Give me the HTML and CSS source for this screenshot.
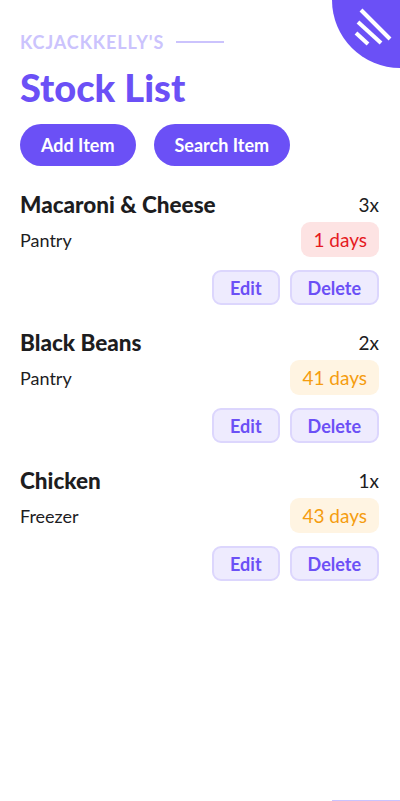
FILE: index.html
```html
<!DOCTYPE html>
<html>
<head>
<meta charset="utf-8">
<link rel="stylesheet" href="styles.css">
</head>
<body>
<div class="corner">
  <svg width="68" height="68" viewBox="0 0 68 68">
    <path d="M0 0 H68 V68 A68 68 0 0 1 0 0 Z" fill="#6b50f6"/>
    <line x1="29" y1="10" x2="58" y2="39" stroke="#fff" stroke-width="4"/>
    <line x1="26" y1="22" x2="49" y2="43" stroke="#fff" stroke-width="4"/>
    <line x1="24" y1="33" x2="36" y2="44" stroke="#fff" stroke-width="4"/>
  </svg>
</div>
<main class="page">
  <div class="brand">
    <span class="brand-name">KCJACKKELLY'S</span>
    <span class="brand-line"></span>
  </div>
  <h1 class="title">Stock List</h1>
  <div class="actions">
    <button class="btn-primary">Add Item</button>
    <button class="btn-primary">Search Item</button>
  </div>
  <ul class="list">
    <li class="item">
      <div class="row">
        <span class="name">Macaroni &amp; Cheese</span>
        <span class="qty">3x</span>
      </div>
      <div class="row">
        <span class="loc">Pantry</span>
        <span class="badge badge-red">1 days</span>
      </div>
      <div class="controls">
        <button class="btn-soft">Edit</button>
        <button class="btn-soft">Delete</button>
      </div>
    </li>
    <li class="item">
      <div class="row">
        <span class="name">Black Beans</span>
        <span class="qty">2x</span>
      </div>
      <div class="row">
        <span class="loc">Pantry</span>
        <span class="badge badge-orange">41 days</span>
      </div>
      <div class="controls">
        <button class="btn-soft">Edit</button>
        <button class="btn-soft">Delete</button>
      </div>
    </li>
    <li class="item">
      <div class="row">
        <span class="name">Chicken</span>
        <span class="qty">1x</span>
      </div>
      <div class="row">
        <span class="loc">Freezer</span>
        <span class="badge badge-orange">43 days</span>
      </div>
      <div class="controls">
        <button class="btn-soft">Edit</button>
        <button class="btn-soft">Delete</button>
      </div>
    </li>
  </ul>
</main>
<div class="bottom-line"></div>
</body>
</html>
```
FILE: styles.css
```css
* { box-sizing: border-box; }
html, body { margin: 0; padding: 0; }
body {
  width: 400px;
  height: 801px;
  overflow: hidden;
  background: #fff;
  font-family: Lato, "Noto Sans", sans-serif;
  color: #1d1d1f;
  position: relative;
}
.corner {
  position: absolute;
  top: 0;
  right: 0;
  width: 68px;
  height: 68px;
}
.corner svg { display: block; }
.page {
  padding: 32px 21px 0 20px;
}
.brand {
  display: flex;
  align-items: center;
  gap: 12px;
  height: 20px;
}
.brand-name {
  font-size: 18px;
  font-weight: 700;
  letter-spacing: 0.9px;
  color: #cbc3fd;
}
.brand-line {
  width: 48px;
  height: 2px;
  background: #cbc3fd;
}
.title {
  margin: 13px 0 0;
  font-size: 38px;
  line-height: 44px;
  font-weight: 900;
  color: #6b50f6;
}
.actions {
  display: flex;
  gap: 18px;
  margin-top: 15px;
}
.btn-primary {
  height: 42px;
  padding: 0 21px;
  border: none;
  border-radius: 21px;
  background: #6b50f6;
  color: #fff;
  font-family: inherit;
  font-size: 18px;
  font-weight: 700;
}
.list {
  list-style: none;
  margin: 26px 0 0;
  padding: 0;
}
.item {
  padding-bottom: 25px;
}
.row {
  display: flex;
  justify-content: space-between;
  align-items: center;
}
.row + .row { margin-top: 4px; }
.name {
  font-size: 22.5px;
  line-height: 26px;
  font-weight: 900;
  color: #1d1d1f;
}
.qty {
  font-size: 19px;
  line-height: 26px;
  color: #1d1d1f;
}
.loc {
  font-size: 18px;
  color: #1d1d1f;
}
.badge {
  height: 35px;
  display: flex;
  align-items: center;
  padding: 0 12px;
  border-radius: 9px;
  font-size: 19px;
}
.badge-red { background: #fde3e3; color: #e51a1f; }
.badge-orange { background: #fff4e2; color: #f59d10; }
.controls {
  display: flex;
  justify-content: flex-end;
  gap: 10px;
  margin-top: 13px;
}
.btn-soft {
  height: 35px;
  padding: 0 16px;
  border: 2px solid #dcd6fd;
  border-radius: 9px;
  background: #eeebfe;
  color: #6b50f6;
  font-family: inherit;
  font-size: 18px;
  font-weight: 700;
}
.bottom-line {
  position: absolute;
  right: 0;
  bottom: 0;
  width: 68px;
  height: 1px;
  background: #cbc3fd;
}
```
